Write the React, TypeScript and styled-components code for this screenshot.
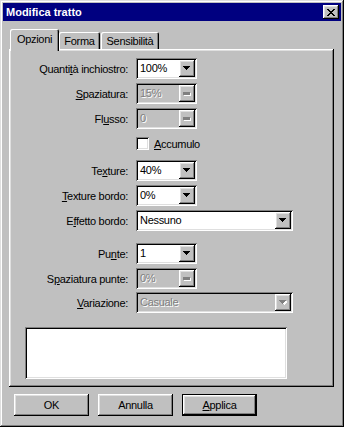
import React from "react";
import styled, { createGlobalStyle, css } from "styled-components";

const GlobalStyle = createGlobalStyle`
  html, body {
    margin: 0;
    padding: 0;
    background: #c0c0c0;
  }
  body {
    font-family: "Liberation Sans", Arial, sans-serif;
    font-size: 11px;
    letter-spacing: -0.3px;
    color: #000;
  }
`;

const raised = css`
  box-shadow: inset -1px -1px #000, inset 1px 1px #fff, inset -2px -2px #808080,
    inset 2px 2px #dfdfdf;
`;

const sunken = css`
  box-shadow: inset 1px 1px #808080, inset -1px -1px #fff, inset 2px 2px #000,
    inset -2px -2px #dfdfdf;
`;

const Window = styled.div`
  width: 344px;
  height: 427px;
  box-sizing: border-box;
  padding: 3px;
  background: #c0c0c0;
  box-shadow: inset -1px -1px #000, inset 1px 1px #dfdfdf, inset -2px -2px #808080,
    inset 2px 2px #fff;
  display: flex;
  flex-direction: column;
`;

const TitleBar = styled.div`
  height: 18px;
  background: #000080;
  color: #fff;
  display: flex;
  align-items: center;
  justify-content: space-between;
  padding: 0 2px 0 3px;
  font-weight: bold;
  letter-spacing: 0;
`;

const CloseButton = styled.div`
  width: 16px;
  height: 14px;
  background: #c0c0c0;
  ${raised};
  display: flex;
  align-items: center;
  justify-content: center;
`;

const Body = styled.div`
  flex: 1;
  display: flex;
  flex-direction: column;
  padding: 8px 7px 8px 6px;
`;

const TabRow = styled.div`
  display: flex;
  align-items: flex-end;
  height: 20px;
  padding-left: 1px;
  position: relative;
  z-index: 1;
`;

const Tab = styled.div<{ $active?: boolean; $w: number }>`
  width: ${(p) => p.$w}px;
  height: ${(p) => (p.$active ? 22 : 17)}px;
  margin-bottom: ${(p) => (p.$active ? -2 : 0)}px;
  margin-right: ${(p) => (p.$active ? 0 : 1)}px;
  box-sizing: border-box;
  background: #c0c0c0;
  border-radius: 2px 2px 0 0;
  box-shadow: inset 1px 1px #fff, inset -1px 0 #000, inset -2px 0 #808080;
  display: flex;
  justify-content: center;
  padding-top: ${(p) => (p.$active ? 4 : 3)}px;
`;

const Panel = styled.div`
  height: 338px;
  box-sizing: border-box;
  padding: 9px 0 8px 2px;
  background: #c0c0c0;
  ${raised};
  display: flex;
  flex-direction: column;
`;

const Row = styled.div<{ $mt?: number }>`
  display: flex;
  align-items: center;
  height: 21px;
  margin-top: ${(p) => p.$mt ?? 0}px;
`;

const Label = styled.div`
  width: 125px;
  flex-shrink: 0;
  box-sizing: border-box;
  padding-right: 8px;
  text-align: right;
  white-space: nowrap;
`;

const Key = styled.span`
  text-decoration: underline;
  text-underline-offset: 1px;
`;

const Combo = styled.div<{ $w: number; $disabled?: boolean }>`
  width: ${(p) => p.$w}px;
  height: 21px;
  box-sizing: border-box;
  padding: 2px;
  display: flex;
  background: ${(p) => (p.$disabled ? "#c0c0c0" : "#fff")};
  ${sunken};
`;

const ComboText = styled.div<{ $disabled?: boolean }>`
  flex: 1;
  padding-left: 2px;
  line-height: 17px;
  color: ${(p) => (p.$disabled ? "#808080" : "#000")};
  text-shadow: ${(p) => (p.$disabled ? "1px 1px #fff" : "none")};
`;

const DropButton = styled.div`
  width: 16px;
  height: 17px;
  background: #c0c0c0;
  ${raised};
  display: flex;
  align-items: center;
  justify-content: center;
`;

const CheckRow = styled.label`
  display: flex;
  align-items: center;
  gap: 5px;
  margin-left: 125px;
`;

const CheckBox = styled.span`
  width: 13px;
  height: 13px;
  box-sizing: border-box;
  background: #fff;
  ${sunken};
`;

const Preview = styled.div`
  margin: 14px 0 0 14px;
  width: 262px;
  height: 52px;
  background: #fff;
  ${sunken};
`;

const ButtonRow = styled.div`
  display: flex;
  gap: 9px;
  margin-top: 7px;
  padding-left: 5px;
`;

const Button = styled.div<{ $default?: boolean }>`
  width: 75px;
  height: 22px;
  box-sizing: border-box;
  display: flex;
  align-items: center;
  justify-content: center;
  background: #c0c0c0;
  ${(p) =>
    p.$default
      ? css`
          box-shadow: inset 0 0 0 1px #000, inset -2px -2px #000, inset 2px 2px #fff,
            inset -3px -3px #808080, inset 3px 3px #dfdfdf;
        `
      : raised};
`;

const CloseIcon = () => (
  <svg width="8" height="7" viewBox="0 0 8 7" shapeRendering="crispEdges">
    <path
      fill="#000"
      d="M0 0h2v1H0zM6 0h2v1H6zM1 1h2v1H1zM5 1h2v1H5zM2 2h4v1H2zM3 3h2v1H3zM2 4h4v1H2zM1 5h2v1H1zM5 5h2v1H5zM0 6h2v1H0zM6 6h2v1H6z"
    />
  </svg>
);

type ArrowKind = "down" | "bar" | "downOff";

const Arrow = ({ kind }: { kind: ArrowKind }) => {
  if (kind === "bar") {
    return (
      <svg width="8" height="4" viewBox="0 0 8 4" shapeRendering="crispEdges">
        <path fill="#fff" d="M1 3h7v1H1zM7 1h1v3H7z" />
        <path fill="#808080" d="M0 0h7v3H0z" />
      </svg>
    );
  }
  const fill = kind === "down" ? "#000" : "#808080";
  return (
    <svg width="8" height="5" viewBox="0 0 8 5" shapeRendering="crispEdges">
      {kind === "downOff" && <path fill="#fff" d="M2 1h7v1H2zM3 2h5v1H3zM4 3h3v1H4zM5 4h1v1H5z" />}
      <path fill={fill} d="M0 0h7v1H0zM1 1h5v1H1zM2 2h3v1H2zM3 3h1v1H3z" />
    </svg>
  );
};

const ComboBox = ({
  value,
  w = 61,
  disabled,
  arrow,
}: {
  value: string;
  w?: number;
  disabled?: boolean;
  arrow?: ArrowKind;
}) => (
  <Combo $w={w} $disabled={disabled}>
    <ComboText $disabled={disabled}>{value}</ComboText>
    <DropButton>
      <Arrow kind={arrow ?? (disabled ? "bar" : "down")} />
    </DropButton>
  </Combo>
);

export default function App() {
  return (
    <>
      <GlobalStyle />
      <Window>
        <TitleBar>
          <span>Modifica tratto</span>
          <CloseButton>
            <CloseIcon />
          </CloseButton>
        </TitleBar>
        <Body>
          <TabRow>
            <Tab $active $w={49}>Opzioni</Tab>
            <Tab $w={41}>Forma</Tab>
            <Tab $w={58}>Sensibilità</Tab>
          </TabRow>
          <Panel>
            <Row>
              <Label>
                Quanti<Key>t</Key>à inchiostro:
              </Label>
              <ComboBox value="100%" />
            </Row>
            <Row $mt={4}>
              <Label>
                <Key>S</Key>paziatura:
              </Label>
              <ComboBox value="15%" disabled />
            </Row>
            <Row $mt={4}>
              <Label>
                Fl<Key>u</Key>sso:
              </Label>
              <ComboBox value="0" disabled />
            </Row>
            <Row $mt={4}>
              <CheckRow>
                <CheckBox />
                <span>
                  <Key>A</Key>ccumulo
                </span>
              </CheckRow>
            </Row>
            <Row $mt={6}>
              <Label>
                Te<Key>x</Key>ture:
              </Label>
              <ComboBox value="40%" />
            </Row>
            <Row $mt={4}>
              <Label>
                <Key>T</Key>exture bordo:
              </Label>
              <ComboBox value="0%" />
            </Row>
            <Row $mt={4}>
              <Label>
                E<Key>f</Key>fetto bordo:
              </Label>
              <ComboBox value="Nessuno" w={157} />
            </Row>
            <Row $mt={12}>
              <Label>
                Pu<Key>n</Key>te:
              </Label>
              <ComboBox value="1" />
            </Row>
            <Row $mt={4}>
              <Label>
                S<Key>p</Key>aziatura punte:
              </Label>
              <ComboBox value="0%" disabled />
            </Row>
            <Row $mt={3}>
              <Label>
                <Key>V</Key>ariazione:
              </Label>
              <ComboBox value="Casuale" w={157} disabled arrow="downOff" />
            </Row>
            <Preview />
          </Panel>
          <ButtonRow>
            <Button>OK</Button>
            <Button>Annulla</Button>
            <Button $default>
              <span>
                <Key>A</Key>pplica
              </span>
            </Button>
          </ButtonRow>
        </Body>
      </Window>
    </>
  );
}
